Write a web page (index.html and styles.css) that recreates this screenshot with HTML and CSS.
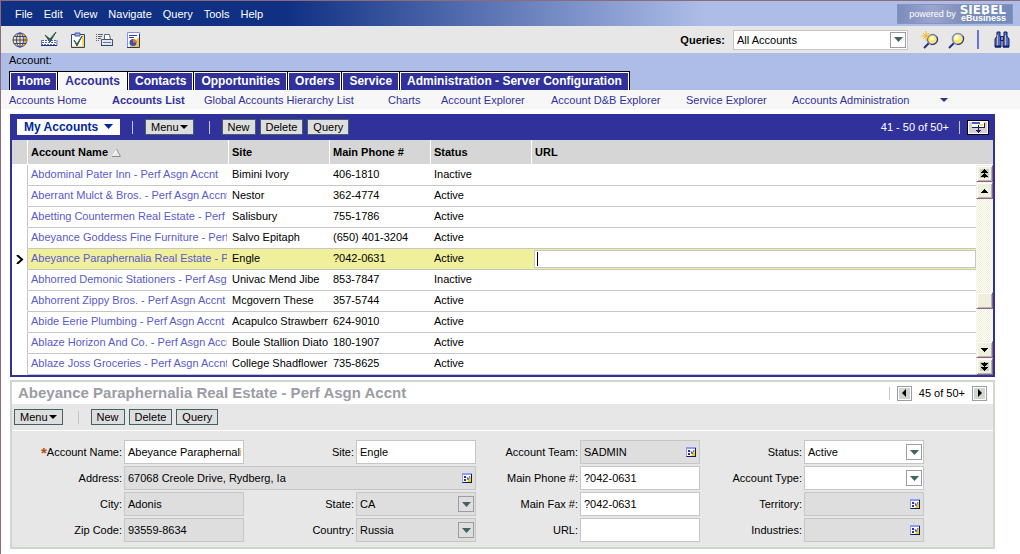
FILE: index.html
```html
<!DOCTYPE html>
<html lang="en">
<head>
    <meta charset="UTF-8">
    <meta name="viewport" content="width=device-width, initial-scale=1.0">
    <title>Siebel - Accounts List</title>
    <link rel="stylesheet" href="styles.css">
</head>
<body>
    <!-- shared symbols -->
    <svg class="symbols" aria-hidden="true">
        <symbol id="pick" viewBox="0 0 10 10">
            <rect width="10" height="10" fill="#8c9cf7"/>
            <path d="M1 9H9V1h1v9H0z" fill="#00215a"/>
            <rect x="1" y="2" width="8" height="7" fill="#fff"/>
            <path d="M5 9h4V3z" fill="#ffc61a"/>
            <path d="M2 3h2v2H2zM2 6h2v2H2z" fill="#31319c"/>
            <path d="M5 4l1 3 2-4" fill="none" stroke="#4a5aad"/>
        </symbol>
        <symbol id="down" viewBox="0 0 9 5"><path d="M0 0h9L4.500 5z"/></symbol>
    </svg>

    <div class="page">
        <header class="menubar">
            <nav class="menus">
                <button>File</button>
                <button>Edit</button>
                <button>View</button>
                <button>Navigate</button>
                <button>Query</button>
                <button>Tools</button>
                <button>Help</button>
            </nav>
            <div class="brand">
                <span class="brand-by">powered by</span>
                <span class="brand-name"><b>SIEBEL</b><small>eBusiness</small></span>
            </div>
        </header>

        <div class="toolbar">
            <div class="tools">
                <button class="tool" aria-label="Site Map">
                    <svg width="16" height="16" viewBox="0 0 16 16">
                        <circle cx="8" cy="8" r="7" fill="#ffe78c" stroke="#31428c"/>
                        <path d="M11 2c5 3 5 9 0 12 2-4 2-8 0-12z" fill="#e7a500"/>
                        <path d="M8 1v14M1 8h14M2 4.500h12M2 11.500h12" stroke="#31429c" fill="none"/>
                        <ellipse cx="8" cy="8" rx="3.500" ry="7" fill="none" stroke="#31429c"/>
                    </svg>
                </button>
                <button class="tool" aria-label="Smart Script">
                    <svg width="18" height="16" viewBox="0 0 18 16">
                        <path d="M2 8h14v5H1z" fill="#fff"/>
                        <path d="M2 8.500h14M2 10.500h14M1 12.500h15" stroke="#5263c6" stroke-dasharray="2 1"/>
                        <path d="M1.500 8v5.500H17V8" fill="none" stroke="#6b7bce"/>
                        <path d="M1 13.500h16" stroke="#21318c"/>
                        <path d="M5 3l5 4 6-7-6 10z" fill="#315a4a" stroke="#315a4a"/>
                    </svg>
                </button>
                <button class="tool" aria-label="Tasks">
                    <svg width="18" height="16" viewBox="0 0 18 16">
                        <path d="M3.500 2.500h13v13h-13z" fill="#ffd65a" stroke="#31428c"/>
                        <path d="M4 3h10v11H4z" fill="#fff"/>
                        <path d="M7 1h5v3H7z" fill="#a5b5e7" stroke="#4252a5"/>
                        <path d="M6 8l3 4 5-8-5 10z" fill="#315a4a" stroke="#315a4a"/>
                    </svg>
                </button>
                <button class="tool" aria-label="Print">
                    <svg width="18" height="16" viewBox="0 0 18 16">
                        <path d="M0 2.500h7M0 4.500h6M0 6.500h5M0 8.500h3" stroke="#63636b" stroke-dasharray="1 1 4 0"/>
                        <path d="M8.500 8V2.500h5L14.500 8" fill="#fff" stroke="#5a6b84"/>
                        <path d="M5.500 7.500h11v6h-11z" fill="#e7e7ef" stroke="#42527b"/>
                        <path d="M7 10.500h8" stroke="#6373a5"/>
                        <path d="M5 13.500h12" stroke="#31426b"/>
                    </svg>
                </button>
                <button class="tool" aria-label="Reports">
                    <svg width="18" height="16" viewBox="0 0 18 16">
                        <path d="M3.500 .5h12v15h-12z" fill="#fff" stroke="#7b94e7"/>
                        <path d="M15 5v10H5z" fill="#ffc629"/>
                        <path d="M5 3.500h8M5 5.500h5" stroke="#31429c"/>
                        <path d="M3 15.500h12.500V2" stroke="#21398c" fill="none"/>
                        <circle cx="9" cy="10.500" r="3.500" fill="#3952b5"/>
                        <path d="M9 10.500V7a3.500 3.500 0 0 1 3.500 3.500z" fill="#e77b42"/>
                    </svg>
                </button>
            </div>
            <div class="queries">
                <label for="savedQuery">Queries:</label>
                <div class="drop query-drop">
                    <select id="savedQuery">
                        <option>All Accounts</option>
                    </select>
                    <span class="arrow"><svg width="9" height="5"><use href="#down"/></svg></span>
                </div>
                <button class="tool new-query" aria-label="New Query">
                    <svg width="18" height="18" viewBox="0 0 18 18">
                        <path d="M8 12l-5 5" stroke="#21317b" stroke-width="2"/>
                        <circle cx="11.500" cy="8.500" r="5" fill="#ffe773" stroke="#6b7bad" stroke-width="1.500"/>
                        <path d="M16 6c2 4-2 8-6 7.500" stroke="#21317b" fill="none"/>
                        <circle cx="11" cy="7.500" r="2" fill="#fffbd6"/>
                        <path d="M5 0v10M0 5h10M2 2l6 6M8 2L2 8" stroke="#f7b521"/>
                    </svg>
                </button>
                <button class="tool run-query" aria-label="Execute Query">
                    <svg width="18" height="18" viewBox="0 0 18 18">
                        <path d="M6 12l-5 5" stroke="#21317b" stroke-width="2"/>
                        <circle cx="10" cy="8" r="5.500" fill="#ffe773" stroke="#7b8cbd" stroke-width="1.500"/>
                        <circle cx="8.500" cy="6.500" r="2.500" fill="#fffbd6"/>
                        <path d="M15 5c2 4-1 8.500-6 8.500" stroke="#21317b" fill="none"/>
                    </svg>
                </button>
                <span class="tool-rule"></span>
                <button class="tool" aria-label="Search Center">
                    <svg width="16" height="18" viewBox="0 0 16 18">
                        <path d="M3 1h3v4l1 3v8H1V8l2-3zM10 1h3v4l2 3v8H9V8l1-3z" fill="#4a6bce" stroke="#10216b"/>
                        <path d="M6.500 5.500h3v4h-3z" fill="#7b94e7" stroke="#10216b"/>
                        <path d="M3.500 4v11M11.500 4v11" stroke="#f7b563"/>
                        <path d="M1 15.500h6M9 15.500h6" stroke="#10216b" stroke-width="2"/>
                    </svg>
                </button>
            </div>
        </div>

        <div class="screenbar">
            <div class="crumb">Account:</div>
            <nav class="tabs">
                <a href="#">Home</a>
                <a href="#" class="active">Accounts</a>
                <a href="#">Contacts</a>
                <a href="#">Opportunities</a>
                <a href="#">Orders</a>
                <a href="#">Service</a>
                <a href="#">Administration - Server Configuration</a>
            </nav>
        </div>

        <nav class="views">
            <a href="#">Accounts Home</a>
            <a href="#" class="active">Accounts List</a>
            <a href="#">Global Accounts Hierarchy List</a>
            <a href="#">Charts</a>
            <a href="#">Account Explorer</a>
            <a href="#">Account D&amp;B Explorer</a>
            <a href="#">Service Explorer</a>
            <a href="#">Accounts Administration</a>
            <button class="more" aria-label="More views"><svg width="8" height="4" viewBox="0 0 8 4"><path d="M0 0h8L4 4z"/></svg></button>
        </nav>

        <main>
            <section class="list-applet">
                <div class="list-bar">
                    <div class="visibility">
                        <select aria-label="Visibility">
                            <option>My Accounts</option>
                        </select>
                        <svg width="9" height="5"><use href="#down"/></svg>
                    </div>
                    <span class="rule"></span>
                    <button class="btn">Menu<svg width="8" height="4" viewBox="0 0 8 4"><path d="M0 0h8L4 4z"/></svg></button>
                    <span class="rule wide"></span>
                    <div class="btn-group">
                        <button class="btn">New</button>
                        <button class="btn">Delete</button>
                        <button class="btn">Query</button>
                    </div>
                    <span class="count">41 - 50 of 50+</span>
                    <span class="rule"></span>
                    <button class="show-more" aria-label="Show more">
                        <svg width="18" height="11" viewBox="0 0 18 11" shape-rendering="crispEdges">
                            <path d="M3 0h12v6H3z" fill="#fff"/>
                            <path d="M3 0h8v2H3z" fill="#4a5ace"/>
                            <path d="M10 2h4v2h-4z" fill="#ffdf6b"/>
                            <path d="M3 5h12V1h1v5H3z" fill="#18214a"/>
                            <path d="M9 3h1v5h2v1h-1v1h-1v1H9v-1H8V9H7V8h2z" fill="#18214a"/>
                        </svg>
                    </button>
                </div>

                <table class="list">
                    <colgroup>
                        <col class="c-mark">
                        <col class="c-name">
                        <col class="c-text">
                        <col class="c-text">
                        <col class="c-text">
                        <col>
                        <col class="c-scroll">
                    </colgroup>
                    <thead>
                        <tr>
                            <th></th>
                            <th>Account Name
                                <svg class="sort" width="9" height="8" viewBox="0 0 9 8"><path d="M4.500 1L.500 7.500h8z" fill="#e7e7e7" stroke="#fff"/><path d="M4.500 0l4 7.500H0" fill="none" stroke="#8c8c8c"/></svg>
                            </th>
                            <th>Site</th>
                            <th>Main Phone #</th>
                            <th>Status</th>
                            <th class="last">URL</th>
                            <th class="last"></th>
                        </tr>
                    </thead>
                    <tbody>
                        <tr>
                            <td class="mark"></td>
                            <td><a href="#">Abdominal Pater Inn - Perf Asgn Accnt</a></td>
                            <td>Bimini Ivory</td>
                            <td>406-1810</td>
                            <td>Inactive</td>
                            <td></td>
                            <td class="scroll-cell" rowspan="10">
                                <div class="scroll">
                                    <button aria-label="Previous page"><svg class="shade" width="9" height="9" viewBox="0 0 9 9" shape-rendering="crispEdges"><path d="M4 0h1v1h1v1h1v1h1v1H5v1h1v1h1v1h1v1H5v1H4V8H1V7h1V6h1V5h1V4H1V3h1V2h1V1h1z"/></svg></button>
                                    <button aria-label="Previous record"><svg width="7" height="4" viewBox="0 0 7 4" shape-rendering="crispEdges"><path d="M3 0h1v1h1v1h1v1h1v1H0V3h1V2h1V1h1z"/></svg></button>
                                    <div class="track"><div class="thumb"></div></div>
                                    <button aria-label="Next record"><svg width="7" height="4" viewBox="0 0 7 4" shape-rendering="crispEdges"><path d="M3 4h1V3h1V2h1V1h1V0H0v1h1v1h1v1h1z"/></svg></button>
                                    <button aria-label="Next page"><svg class="shade" width="9" height="9" viewBox="0 0 9 9" shape-rendering="crispEdges"><path d="M4 9h1V8h1V7h1V6h1V5H5V4h1V3h1V2h1V1H5V0H4v1H1v1h1v1h1v1h1v1H1v1h1v1h1v1h1z"/></svg></button>
                                </div>
                            </td>
                        </tr>
                        <tr>
                            <td class="mark"></td>
                            <td><a href="#">Aberrant Mulct &amp; Bros. - Perf Asgn Accnt</a></td>
                            <td>Nestor</td>
                            <td>362-4774</td>
                            <td>Active</td>
                            <td></td>
                        </tr>
                        <tr>
                            <td class="mark"></td>
                            <td><a href="#">Abetting Countermen Real Estate - Perf Asgn Accnt</a></td>
                            <td>Salisbury</td>
                            <td>755-1786</td>
                            <td>Active</td>
                            <td></td>
                        </tr>
                        <tr>
                            <td class="mark"></td>
                            <td><a href="#">Abeyance Goddess Fine Furniture - Perf Asgn Accnt</a></td>
                            <td>Salvo Epitaph</td>
                            <td>(650) 401-3204</td>
                            <td>Active</td>
                            <td></td>
                        </tr>
                        <tr class="selected">
                            <td class="mark"><svg width="8" height="9" viewBox="0 0 8 9"><path d="M1 0l5 4.500L1 9" fill="none" stroke="#000" stroke-width="2"/></svg></td>
                            <td><a href="#">Abeyance Paraphernalia Real Estate - Perf Asgn Accnt</a></td>
                            <td>Engle</td>
                            <td>?042-0631</td>
                            <td>Active</td>
                            <td class="edit"><div class="edit-box"><input type="text" aria-label="URL"></div></td>
                        </tr>
                        <tr>
                            <td class="mark"></td>
                            <td><a href="#">Abhorred Demonic Stationers - Perf Asgn Accnt</a></td>
                            <td>Univac Mend Jibe</td>
                            <td>853-7847</td>
                            <td>Inactive</td>
                            <td></td>
                        </tr>
                        <tr>
                            <td class="mark"></td>
                            <td><a href="#">Abhorrent Zippy Bros. - Perf Asgn Accnt</a></td>
                            <td>Mcgovern These</td>
                            <td>357-5744</td>
                            <td>Active</td>
                            <td></td>
                        </tr>
                        <tr>
                            <td class="mark"></td>
                            <td><a href="#">Abide Eerie Plumbing - Perf Asgn Accnt</a></td>
                            <td>Acapulco Strawberry</td>
                            <td>624-9010</td>
                            <td>Active</td>
                            <td></td>
                        </tr>
                        <tr>
                            <td class="mark"></td>
                            <td><a href="#">Ablaze Horizon And Co. - Perf Asgn Accnt</a></td>
                            <td>Boule Stallion Diatom</td>
                            <td>180-1907</td>
                            <td>Active</td>
                            <td></td>
                        </tr>
                        <tr>
                            <td class="mark"></td>
                            <td><a href="#">Ablaze Joss Groceries - Perf Asgn Accnt</a></td>
                            <td>College Shadflower</td>
                            <td>735-8625</td>
                            <td>Active</td>
                            <td></td>
                        </tr>
                    </tbody>
                </table>
            </section>

            <section class="form-applet">
                <div class="form-title">
                    <h1>Abeyance Paraphernalia Real Estate - Perf Asgn Accnt</h1>
                    <span class="rule"></span>
                    <button class="step" aria-label="Previous"><svg width="4" height="8" viewBox="0 0 4 8"><path d="M4 0v8L0 4z"/></svg></button>
                    <span>45 of 50+</span>
                    <button class="step" aria-label="Next"><svg width="4" height="8" viewBox="0 0 4 8"><path d="M0 0v8l4-4z"/></svg></button>
                </div>
                <div class="form-bar">
                    <button class="btn">Menu<svg width="8" height="4" viewBox="0 0 8 4"><path d="M0 0h8L4 4z"/></svg></button>
                    <span class="rule wide"></span>
                    <div class="btn-group">
                        <button class="btn">New</button>
                        <button class="btn">Delete</button>
                        <button class="btn">Query</button>
                    </div>
                </div>
                <form class="fields">
                    <label for="accountName"><b class="required">*</b>Account Name:</label>
                    <div class="field"><input type="text" id="accountName" value="Abeyance Paraphernalia Real Estate - Perf Asgn Accnt"></div>
                    <label for="site">Site:</label>
                    <div class="field"><input type="text" id="site" value="Engle"></div>
                    <label for="team">Account Team:</label>
                    <div class="field locked"><input type="text" id="team" value="SADMIN" readonly><button type="button" class="pick" aria-label="Pick team"><svg width="10" height="10"><use href="#pick"/></svg></button></div>
                    <label for="status">Status:</label>
                    <div class="field drop"><select id="status"><option>Active</option></select><span class="arrow"><svg width="9" height="5"><use href="#down"/></svg></span></div>

                    <label for="address">Address:</label>
                    <div class="field locked span"><input type="text" id="address" value="67068 Creole Drive, Rydberg, Ia" readonly><button type="button" class="pick" aria-label="Pick address"><svg width="10" height="10"><use href="#pick"/></svg></button></div>
                    <label for="phone">Main Phone #:</label>
                    <div class="field"><input type="text" id="phone" value="?042-0631"></div>
                    <label for="type">Account Type:</label>
                    <div class="field drop"><select id="type"><option></option></select><span class="arrow"><svg width="9" height="5"><use href="#down"/></svg></span></div>

                    <label for="city">City:</label>
                    <div class="field locked"><input type="text" id="city" value="Adonis" readonly></div>
                    <label for="state">State:</label>
                    <div class="field locked drop"><select id="state"><option>CA</option></select><span class="arrow"><svg width="9" height="5"><use href="#down"/></svg></span></div>
                    <label for="fax">Main Fax #:</label>
                    <div class="field"><input type="text" id="fax" value="?042-0631"></div>
                    <label for="territory">Territory:</label>
                    <div class="field locked"><input type="text" id="territory" readonly><button type="button" class="pick" aria-label="Pick territory"><svg width="10" height="10"><use href="#pick"/></svg></button></div>

                    <label for="zip">Zip Code:</label>
                    <div class="field locked"><input type="text" id="zip" value="93559-8634" readonly></div>
                    <label for="country">Country:</label>
                    <div class="field locked drop"><select id="country"><option>Russia</option></select><span class="arrow"><svg width="9" height="5"><use href="#down"/></svg></span></div>
                    <label for="url">URL:</label>
                    <div class="field"><input type="text" id="url"></div>
                    <label for="industries">Industries:</label>
                    <div class="field locked"><input type="text" id="industries" readonly><button type="button" class="pick" aria-label="Pick industry"><svg width="10" height="10"><use href="#pick"/></svg></button></div>
                </form>
            </section>
        </main>
    </div>
</body>
</html>
```

FILE: styles.css
```css
* {
    box-sizing: border-box;
}
body {
    margin: 0;
    background: #fff;
    color: #000;
    font-family: "Liberation Sans", Arial, sans-serif;
    font-size: 11px;
    line-height: 14px;
}
button, input, select {
    font: inherit;
    color: inherit;
    margin: 0;
    padding: 0;
    border: none;
    border-radius: 0;
    background: none;
}
select {
    appearance: none;
}
input, select {
    outline: none;
    min-width: 0;
}
svg {
    display: block;
}
a {
    text-decoration: none;
}
.symbols {
    position: absolute;
    width: 0;
    height: 0;
}
.page {
    min-height: 100vh;
    border-top: 1px solid #8c6b7b;
    border-left: 1px solid #8c6b7b;
}

/* menu bar */
.menubar {
    display: flex;
    justify-content: space-between;
    align-items: center;
    height: 25px;
    padding: 0 7px 0 14px;
    background: linear-gradient(to right, #103084 28%, #adbde7 69%);
}
.menus {
    display: flex;
    gap: 11px;
    color: #fff;
}
.brand {
    display: flex;
    align-items: center;
    justify-content: flex-end;
    gap: 4px;
    width: 116px;
    height: 20px;
    padding-right: 6px;
    color: #fff;
    background: linear-gradient(to right, #7b8cbd, #9ca5ce 30%, #7b8cb5 60%, #738cbd);
    border: 1px solid #8494bd;
}
.brand-by {
    font-size: 9px;
    line-height: 12px;
}
.brand-name {
    display: flex;
    flex-direction: column;
    align-items: flex-end;
}
.brand-name b {
    font-family: "DejaVu Sans", sans-serif;
    font-size: 12px;
    line-height: 9px;
    padding-top: 1px;
}
.brand-name small {
    font-size: 9px;
    font-weight: bold;
    line-height: 7px;
}

/* toolbar */
.toolbar {
    display: flex;
    justify-content: space-between;
    align-items: center;
    height: 27px;
    padding: 0 10px 0 11px;
    background: #e7e7e7;
}
.tools {
    display: flex;
    gap: 12px;
}
.tools .tool {
    width: 16px;
}
.queries {
    display: flex;
    align-items: center;
}
.queries label {
    margin-right: 8px;
    font-weight: bold;
}
.new-query {
    margin: 0 9px 0 13px;
}
.tool-rule {
    width: 2px;
    height: 19px;
    margin: 0 15px 0 11px;
    background: #6b73de;
}
.drop {
    position: relative;
    display: flex;
}
.drop select {
    flex: 1;
    padding-left: 3px;
}
.query-drop {
    width: 175px;
    height: 20px;
    background: #fff;
    border: 1px solid #c6c6c6;
}
.arrow {
    position: absolute;
    top: 1px;
    right: 1px;
    display: flex;
    align-items: center;
    justify-content: center;
    width: 16px;
    height: 16px;
    border: 1px solid #9c9ca5;
    fill: #426363;
    pointer-events: none;
}
.field .arrow {
    top: 3px;
}

/* screen tabs */
.screenbar {
    height: 37px;
    padding-left: 8px;
    background: #adbde7;
}
.crumb {
    height: 18px;
}
.tabs {
    display: flex;
    font-size: 12px;
    font-weight: bold;
}
.tabs a {
    height: 19px;
    padding: 1px 7px 0;
    border: 1px solid #000;
    border-width: 1px 0 0 1px;
    box-shadow: inset 1px 1px #fff, inset -1px 0 #fff;
    background: #31319c;
    color: #fff;
    line-height: 16px;
}
.tabs a:last-child {
    border-right-width: 1px;
}
.tabs a.active {
    background: #f7f7f7;
    color: #31319c;
}

/* view links */
.views {
    display: grid;
    grid-template-columns: 103px 92px 184px 53px 110px 135px 106px 148px auto;
    align-items: center;
    justify-content: start;
    height: 19px;
    padding-left: 8px;
    background: #f7f7f7;
    fill: #31319c;
}
.views a {
    color: #31319c;
    white-space: nowrap;
}
.views .active {
    font-weight: bold;
}

/* applets */
main {
    padding: 5px 25px 5px 9px;
}
.btn {
    display: flex;
    align-items: center;
    gap: 1px;
    height: 16px;
    padding: 0 5px;
    background: #dedede;
    border: 1px solid #426363;
}
.btn-group {
    display: flex;
    gap: 4px;
}
.rule {
    width: 1px;
    height: 13px;
    background: #c6c6c6;
}
.rule.wide {
    margin: 0 12px 0 15px;
}
.list-applet {
    border: 2px solid #31319c;
    border-top: none;
}
.list-bar {
    display: flex;
    align-items: center;
    height: 26px;
    padding: 0 4px 0 5px;
    background: #31319c;
}
.visibility {
    position: relative;
    margin-right: 12px;
    background: #fff;
    color: #00299c;
    fill: #00299c;
}
.visibility select {
    display: block;
    width: 103px;
    height: 16px;
    padding-left: 7px;
    font-size: 12px;
    font-weight: bold;
}
.visibility svg {
    position: absolute;
    top: 5px;
    right: 7px;
    pointer-events: none;
}
.list-bar > .btn {
    margin-left: 12px;
}
.count {
    margin: 0 10px 0 auto;
    color: #fff;
}
.show-more {
    width: 22px;
    height: 15px;
    margin-left: 7px;
    padding: 0 1px;
    background: #d6ced6;
    border: 1px solid #000;
    box-shadow: inset 0 0 0 1px #fff;
}

/* list */
.list {
    width: 100%;
    table-layout: fixed;
    border-collapse: separate;
    border-spacing: 0;
}
.c-mark {
    width: 16px;
}
.c-name {
    width: 201px;
}
.c-text {
    width: 101px;
}
.c-scroll {
    width: 17px;
}
.list th {
    height: 25px;
    padding: 0 3px 1px;
    background: #d6d6d6;
    border-right: 1px solid #fff;
    border-bottom: 1px solid #fff;
    text-align: left;
}
.list th.last {
    border-right: none;
}
.sort {
    display: inline-block;
    margin-left: 1px;
    vertical-align: -1px;
}
.list td {
    height: 21px;
    padding: 0 0 2px 3px;
    border-bottom: 1px solid #c6c6c6;
    border-right: 2px solid transparent;
    overflow: hidden;
    white-space: nowrap;
}
.list td:nth-child(6) {
    border-right: none;
}
/* keeps the row line whole under the transparent side borders */
.list tbody tr {
    background: linear-gradient(#c6c6c6, #c6c6c6) 0 100% / 100% 1px no-repeat;
}
.list td a {
    color: #5a5ace;
}
.list .mark {
    padding: 0 0 0 4px;
    background: #fff;
    border-right: 1px solid #c6c6c6;
    border-bottom-color: #fff;
}
.list tbody .selected {
    background-color: #efef9c;
}
.list .edit {
    padding: 0 0 0 2px;
}
.edit-box {
    position: relative;
    height: 18px;
    background: #fff;
    border: 1px solid #c6c6c6;
}
.edit-box input {
    display: block;
    width: 100%;
    height: 16px;
    padding-left: 2px;
}
.edit-box::before {
    content: "";
    position: absolute;
    top: 1px;
    left: 2px;
    width: 1px;
    height: 14px;
    background: #000;
}
.list .scroll-cell {
    padding: 0;
    border: none;
}
.scroll {
    display: flex;
    flex-direction: column;
    height: 210px;
}
.scroll button, .thumb {
    display: flex;
    align-items: center;
    justify-content: center;
    flex: none;
    width: 17px;
    height: 17px;
    background: #efefde;
    border: 1px solid #8c6b7b;
    border-top-color: #f7efe7;
    border-left-color: #f7efe7;
    box-shadow: inset 1px 1px #fff, inset -1px -1px #bdadb5;
}
.scroll .shade {
    background: #cecebd;
}
.track {
    display: flex;
    flex: 1;
    flex-direction: column;
    justify-content: flex-end;
    padding-bottom: 32px;
    background: repeating-conic-gradient(#efefd6 0 25%, #fff 0 50%) 0 0 / 2px 2px;
}

/* form */
.form-applet {
    margin-top: 3px;
    background: #e7e7e7;
    border: 2px solid #ced6ce;
}
.form-title {
    display: flex;
    align-items: center;
    gap: 7px;
    height: 22px;
    padding: 0 6px;
    background: #fff;
}
.form-title h1 {
    flex: 1;
    margin: 0;
    color: #9c9ca5;
    font-size: 15px;
    line-height: 20px;
}
.step {
    display: flex;
    align-items: center;
    justify-content: center;
    width: 15px;
    height: 15px;
    background: #ced6ce;
    border: 1px solid #9c9ca5;
    box-shadow: inset 0 0 0 1px #fff;
}
.form-bar {
    display: flex;
    align-items: center;
    height: 27px;
    padding-left: 2px;
    border-bottom: 1px solid #fff;
}
.fields {
    display: grid;
    grid-template-columns:
        minmax(0, 14fr) minmax(0, 15fr) minmax(0, 14fr) minmax(0, 15fr)
        minmax(0, 13fr) minmax(0, 15fr) minmax(0, 13fr) minmax(0, 15fr);
    row-gap: 2px;
    align-items: center;
    padding: 9px 69px 5px 0;
}
.fields label {
    padding-right: 2px;
    text-align: right;
    white-space: nowrap;
}
.required {
    color: #b54a10;
    font-size: 15px;
    line-height: 10px;
    vertical-align: -2px;
}
.field {
    display: flex;
    align-items: center;
    height: 24px;
    background: #fff;
    border: 1px solid #c6c6c6;
}
.field input {
    flex: 1;
    height: 22px;
    padding-left: 3px;
    margin-right: 2px;
}
.field select {
    height: 22px;
}
.locked {
    background: #dedede;
}
.span {
    grid-column: span 3;
}
.pick {
    margin: 0 3px 0 2px;
}
```
